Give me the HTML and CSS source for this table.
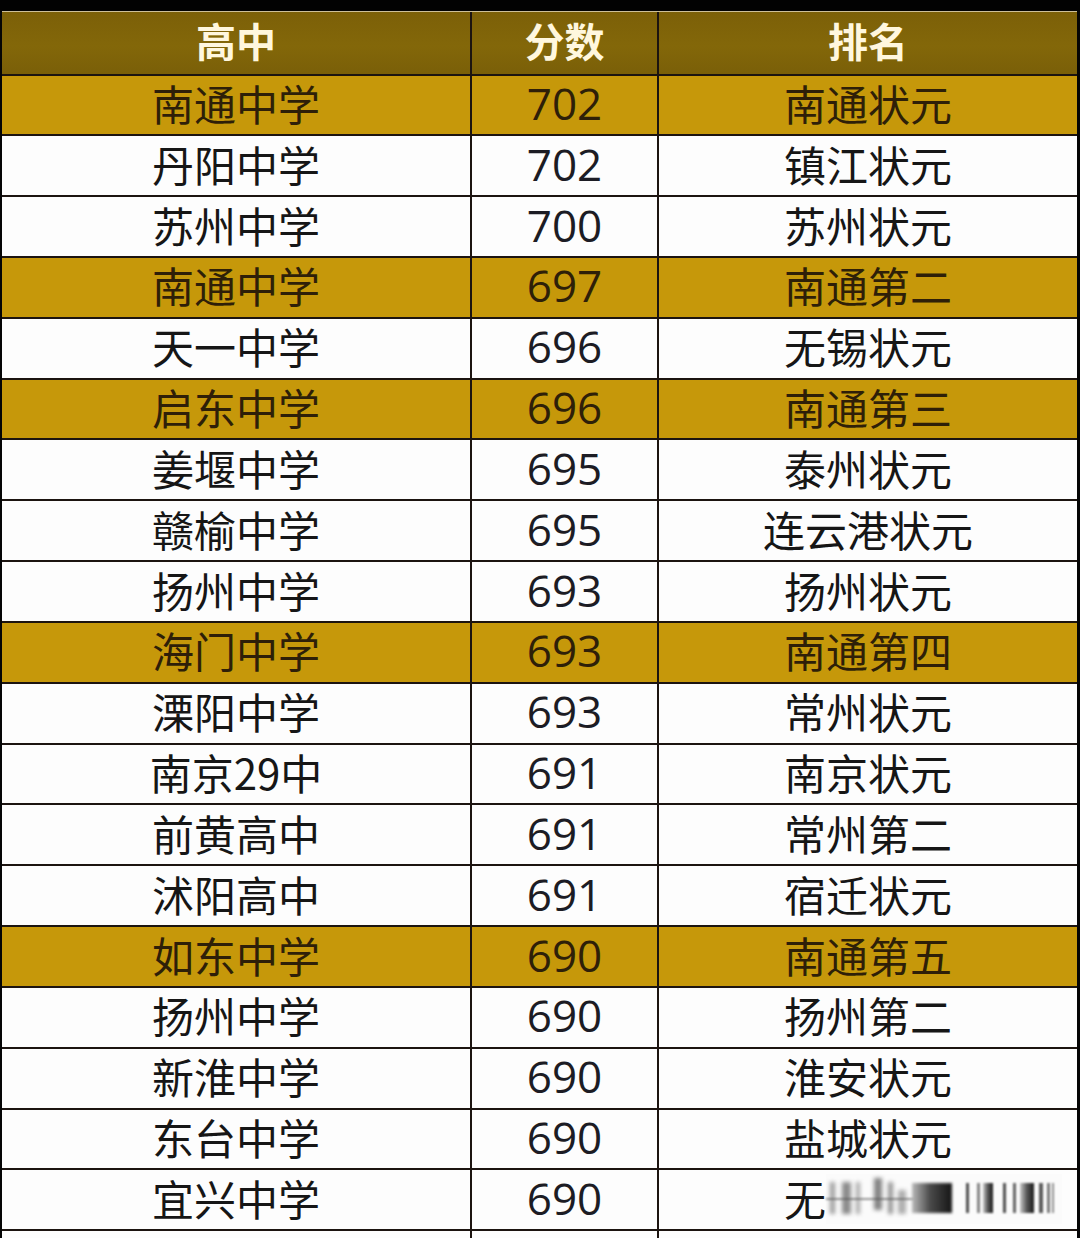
FILE: index.html
```html
<!DOCTYPE html>
<html lang="zh-CN">
<head>
<meta charset="utf-8">
<title>高中 分数 排名</title>
<link rel="stylesheet" href="styles.css">
</head>
<body>
<div class="page">
  <div class="topband"></div>
  <div class="topline"></div>
  <div class="grid">
    <div class="cell head">高中</div><div class="cell head">分数</div><div class="cell head">排名</div>

    <div class="cell gold">南通中学</div><div class="cell gold num">702</div><div class="cell gold">南通状元</div>
    <div class="cell">丹阳中学</div><div class="cell num">702</div><div class="cell">镇江状元</div>
    <div class="cell">苏州中学</div><div class="cell num">700</div><div class="cell">苏州状元</div>
    <div class="cell gold">南通中学</div><div class="cell gold num">697</div><div class="cell gold">南通第二</div>
    <div class="cell">天一中学</div><div class="cell num">696</div><div class="cell">无锡状元</div>
    <div class="cell gold">启东中学</div><div class="cell gold num">696</div><div class="cell gold">南通第三</div>
    <div class="cell">姜堰中学</div><div class="cell num">695</div><div class="cell">泰州状元</div>
    <div class="cell">赣榆中学</div><div class="cell num">695</div><div class="cell">连云港状元</div>
    <div class="cell">扬州中学</div><div class="cell num">693</div><div class="cell">扬州状元</div>
    <div class="cell gold">海门中学</div><div class="cell gold num">693</div><div class="cell gold">南通第四</div>
    <div class="cell">溧阳中学</div><div class="cell num">693</div><div class="cell">常州状元</div>
    <div class="cell">南京29中</div><div class="cell num">691</div><div class="cell">南京状元</div>
    <div class="cell">前黄高中</div><div class="cell num">691</div><div class="cell">常州第二</div>
    <div class="cell">沭阳高中</div><div class="cell num">691</div><div class="cell">宿迁状元</div>
    <div class="cell gold">如东中学</div><div class="cell gold num">690</div><div class="cell gold">南通第五</div>
    <div class="cell">扬州中学</div><div class="cell num">690</div><div class="cell">扬州第二</div>
    <div class="cell">新淮中学</div><div class="cell num">690</div><div class="cell">淮安状元</div>
    <div class="cell">东台中学</div><div class="cell num">690</div><div class="cell">盐城状元</div>
    <div class="cell">宜兴中学</div><div class="cell num">690</div><div class="cell wm-cell">无锡状元
      <div class="watermark">
        <span class="wm-line"></span>
        <span class="wm-s s1"></span><span class="wm-s s2"></span><span class="wm-s s3"></span>
        <span class="wm-s s4"></span><span class="wm-s s5"></span><span class="wm-s s6"></span>
        <span class="wm-block"></span>
        <span class="wm-bar b1"></span><span class="wm-bar b2"></span><span class="wm-bar b3 grad"></span>
        <span class="wm-bar b4"></span><span class="wm-bar b5"></span><span class="wm-bar b6 grad"></span>
        <span class="wm-bar b7"></span><span class="wm-bar b8"></span><span class="wm-bar b9"></span>
      </div>
    </div>
    <div class="cell"></div><div class="cell"></div><div class="cell"></div>
  </div>
</div>
</body>
</html>
```

FILE: styles.css
```css
html, body {
  margin: 0;
  padding: 0;
  background: #000;
  overflow: hidden;
}
.page {
  width: 1080px;
  height: 1238px;
  overflow: hidden;
  background: #050505;
}
.topband {
  height: 11px;
  background: #020202;
}
.topline {
  height: 1px;
  margin: 0 3px 0 2px;
  background: #cdbf98;
}
.grid {
  margin-left: 2px;
  width: 1075px;
  display: grid;
  grid-template-columns: 468px 185px 1fr;
  grid-template-rows: 61.5px repeat(20, 58.84px);
  column-gap: 2px;
  row-gap: 2px;
  background: #1c1410;
}
.cell {
  background: #fdfdfd;
  display: flex;
  align-items: center;
  justify-content: center;
  padding-bottom: 4px;
  box-sizing: border-box;
  font-family: "Noto Sans CJK SC", "Noto Sans", sans-serif;
  font-size: 42px;
  font-weight: 400;
  color: #161616;
  line-height: 1;
}
.num {
  font-family: "Open Sans", "Noto Sans", sans-serif;
  font-size: 44px;
  font-weight: 400;
  color: #1c1c24;
}
.head {
  background: linear-gradient(180deg, #7c6008 0%, #836709 55%, #7a5f08 100%);
  color: #fff7de;
  font-weight: 700;
  font-size: 40px;
  padding-bottom: 6px;
}
.gold {
  background: #c6980a;
  color: #2e1f08;
}
.wm-cell {
  position: relative;
}
.watermark {
  position: absolute;
  left: 167px;
  top: 4px;
  width: 236px;
  height: 50px;
  background: #fbfbfb;
  pointer-events: none;
}
.wm-line {
  position: absolute;
  left: 0;
  top: 24px;
  width: 90px;
  height: 2px;
  background: #9a9a9a;
  filter: blur(1px);
}
.wm-s {
  position: absolute;
  top: 8px;
  height: 32px;
  background: #505050;
  filter: blur(2px);
}
.s1 { left: 4px;  width: 5px;  opacity: 0.55; }
.s2 { left: 16px; width: 9px;  opacity: 0.65; }
.s3 { left: 30px; width: 4px;  opacity: 0.5; }
.s4 { left: 48px; width: 8px;  opacity: 0.7; top: 4px; }
.s5 { left: 62px; width: 5px;  opacity: 0.6; }
.s6 { left: 72px; width: 8px;  opacity: 0.45; top: 16px; height: 24px; }
.wm-block {
  position: absolute;
  left: 86px;
  top: 9px;
  width: 40px;
  height: 30px;
  background: linear-gradient(90deg, #b8b8b8 0%, #4a4a4a 45%, #151515 100%);
  filter: blur(1.5px);
}
.wm-bar {
  position: absolute;
  top: 9px;
  height: 30px;
  background: #262626;
  filter: blur(1px);
}
.wm-bar.grad {
  background: linear-gradient(90deg, #c8c8c8 0%, #555 50%, #1a1a1a 100%);
}
.b1 { left: 140px; width: 3px; opacity: 0.8; }
.b2 { left: 151px; width: 3px; opacity: 0.55; }
.b3 { left: 157px; width: 10px; }
.b4 { left: 177px; width: 3px; opacity: 0.8; }
.b5 { left: 187px; width: 3px; opacity: 0.7; }
.b6 { left: 194px; width: 14px; }
.b7 { left: 213px; width: 4px; opacity: 0.75; }
.b8 { left: 221px; width: 3px; opacity: 0.6; }
.b9 { left: 226px; width: 2px; opacity: 0.5; }
```
